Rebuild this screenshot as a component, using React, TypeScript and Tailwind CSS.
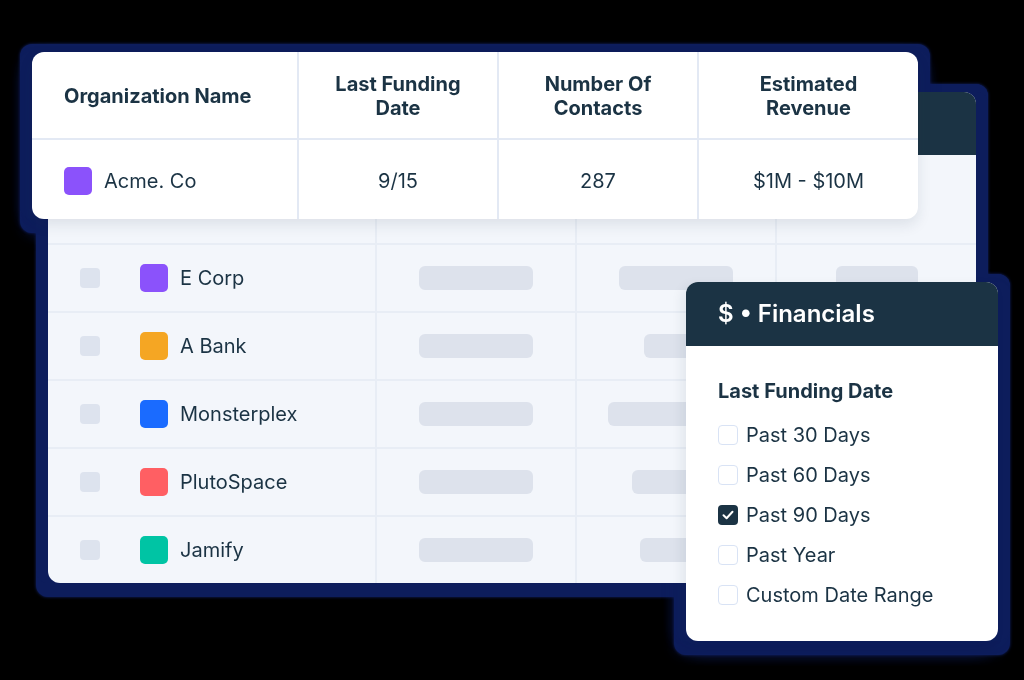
import React from "react";

const rows = [
  { name: "E Corp", color: "bg-[#8b52fb]", b2: 114, b3: 114, b4: 82 },
  { name: "A Bank", color: "bg-[#f5a623]", b2: 114, b3: 64, b4: 82 },
  { name: "Monsterplex", color: "bg-[#1a6bff]", b2: 114, b3: 136, b4: 82 },
  { name: "PlutoSpace", color: "bg-[#ff5f63]", b2: 114, b3: 88, b4: 82 },
  { name: "Jamify", color: "bg-[#00c4a4]", b2: 114, b3: 72, b4: 82 },
];

const options = [
  { label: "Past 30 Days", checked: false },
  { label: "Past 60 Days", checked: false },
  { label: "Past 90 Days", checked: true },
  { label: "Past Year", checked: false },
  { label: "Custom Date Range", checked: false },
];

function Bar({ w }: { w: number }) {
  return <div className="h-[24px] rounded-[6px] bg-[#dde2ec]" style={{ width: w }} />;
}

export default function App() {
  return (
    <div className="w-[1024px] h-[680px] bg-black overflow-hidden font-['Inter',sans-serif] text-[#1b3344]">
      <div className="relative w-full h-full pt-[92px] pl-[48px] [filter:drop-shadow(12px_0_0_#0d1d5c)_drop-shadow(-12px_0_0_#0d1d5c)_drop-shadow(0_14px_0_#0d1d5c)_drop-shadow(0_-8px_0_#0d1d5c)_drop-shadow(0_0_1.5px_#12236a)]">
        {/* Back table card */}
        <div className="w-[928px] rounded-[12px] overflow-hidden bg-[#f3f6fb]">
          <div className="h-[63px] bg-[#1b3344]" />
          <div className="grid grid-cols-[327px_200px_200px_201px] h-[88px]">
            <div />
            <div className="border-l-2 border-[#e8edf5]" />
            <div className="border-l-2 border-[#e8edf5]" />
            <div className="border-l-2 border-[#e8edf5]" />
          </div>
          {rows.map((r) => (
            <div
              key={r.name}
              className="grid grid-cols-[327px_200px_200px_201px] h-[68px] border-t-2 border-[#e8edf5]"
            >
              <div className="flex items-center pl-[32px]">
                <div className="w-[20px] h-[20px] rounded-[4px] bg-[#dde3ee]" />
                <div className={`ml-[40px] w-[28px] h-[28px] rounded-[5px] ${r.color}`} />
                <span className="ml-[12px] text-[20px] leading-none">{r.name}</span>
              </div>
              <div className="flex items-center justify-center border-l-2 border-[#e8edf5]">
                <Bar w={r.b2} />
              </div>
              <div className="flex items-center justify-center border-l-2 border-[#e8edf5]">
                <Bar w={r.b3} />
              </div>
              <div className="flex items-center justify-center border-l-2 border-[#e8edf5]">
                <Bar w={r.b4} />
              </div>
            </div>
          ))}
        </div>

        {/* Front highlighted card */}
        <div className="absolute left-[32px] top-[52px] w-[886px] h-[167px] rounded-[12px] bg-white overflow-hidden shadow-[0_6px_14px_rgba(27,51,68,0.10)]">
          <div className="grid grid-cols-[267px_200px_200px_219px] h-[88px] border-b-2 border-[#e3e9f4] text-[20px] font-bold leading-[24px]">
            <div className="flex items-center pl-[32px] pt-[2px] border-r-2 border-[#e3e9f4]">Organization Name</div>
            <div className="flex items-center justify-center pt-[2px] text-center border-r-2 border-[#e3e9f4]">
              Last Funding
              <br />
              Date
            </div>
            <div className="flex items-center justify-center pt-[2px] text-center border-r-2 border-[#e3e9f4]">
              Number Of
              <br />
              Contacts
            </div>
            <div className="flex items-center justify-center pt-[2px] text-center">
              Estimated
              <br />
              Revenue
            </div>
          </div>
          <div className="grid grid-cols-[267px_200px_200px_219px] h-[79px] text-[20px]">
            <div className="flex items-center pl-[32px] pt-[2px] border-r-2 border-[#e3e9f4]">
              <div className="w-[28px] h-[28px] rounded-[5px] bg-[#8b52fb]" />
              <span className="ml-[12px]">Acme. Co</span>
            </div>
            <div className="flex items-center justify-center pt-[2px] border-r-2 border-[#e3e9f4]">9/15</div>
            <div className="flex items-center justify-center pt-[2px] border-r-2 border-[#e3e9f4]">287</div>
            <div className="flex items-center justify-center pt-[2px]">$1M - $10M</div>
          </div>
        </div>

        {/* Financials filter card */}
        <div className="absolute left-[686px] top-[282px] w-[312px] h-[359px] rounded-[12px] bg-white overflow-hidden shadow-[-4px_4px_12px_rgba(27,51,68,0.08)]">
          <div className="h-[64px] bg-[#1b3344] flex items-center pl-[32px] text-white text-[24px] font-semibold">
            $ • Financials
          </div>
          <div className="pt-[33px] pl-[32px]">
            <div className="text-[20px] font-bold leading-[24px]">Last Funding Date</div>
            <div className="mt-[12px] flex flex-col">
              {options.map((o) => (
                <div key={o.label} className="h-[40px] flex items-center">
                  {o.checked ? (
                    <div className="w-[20px] h-[20px] rounded-[4px] bg-[#1b3344] flex items-center justify-center">
                      <svg width="14" height="14" viewBox="0 0 14 14" fill="none">
                        <path d="M2.5 7.2 L5.6 10.2 L11.5 3.8" stroke="white" strokeWidth="2" strokeLinecap="round" strokeLinejoin="round" />
                      </svg>
                    </div>
                  ) : (
                    <div className="w-[20px] h-[20px] rounded-[4px] border-[1.5px] border-[#d9e3f5] bg-white" />
                  )}
                  <span className="ml-[8px] text-[20px] leading-none">{o.label}</span>
                </div>
              ))}
            </div>
          </div>
        </div>
      </div>
    </div>
  );
}
